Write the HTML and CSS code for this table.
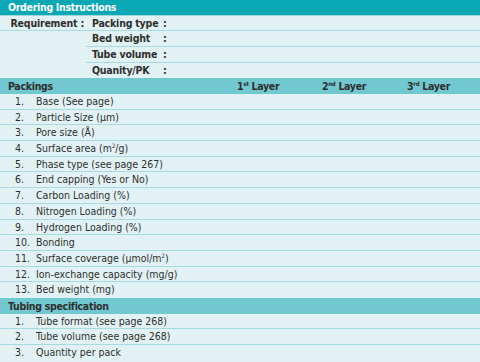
FILE: index.html
```html
<!DOCTYPE html>
<html>
<head>
<meta charset="utf-8">
<link rel="stylesheet" href="styles.css">
</head>
<body>
<div class="sheet">
  <div class="title">Ordering Instructions</div>

  <div class="req req-first">
    <div class="req-lab">Requirement :</div>
    <div class="req-field"><span class="fname">Packing type</span><span class="colon">:</span></div>
  </div>
  <div class="req">
    <div class="req-lab"></div>
    <div class="req-field lined"><span class="fname">Bed weight</span><span class="colon">:</span></div>
  </div>
  <div class="req">
    <div class="req-lab"></div>
    <div class="req-field lined"><span class="fname">Tube volume</span><span class="colon">:</span></div>
  </div>
  <div class="req">
    <div class="req-lab"></div>
    <div class="req-field"><span class="fname">Quanity/PK</span><span class="colon">:</span></div>
  </div>

  <div class="head cols">
    <span class="h-main">Packings</span>
    <span class="h-col">1<sup>st</sup> Layer</span>
    <span class="h-col">2<sup>nd</sup> Layer</span>
    <span class="h-col">3<sup>rd</sup> Layer</span>
  </div>
  <div class="item"><span class="num">1.</span><span>Base (See page)</span></div>
  <div class="item"><span class="num">2.</span><span>Particle Size (μm)</span></div>
  <div class="item"><span class="num">3.</span><span>Pore size (Å)</span></div>
  <div class="item"><span class="num">4.</span><span>Surface area (m<sup>2</sup>/g)</span></div>
  <div class="item"><span class="num">5.</span><span>Phase type (see page 267)</span></div>
  <div class="item"><span class="num">6.</span><span>End capping (Yes or No)</span></div>
  <div class="item"><span class="num">7.</span><span>Carbon Loading (%)</span></div>
  <div class="item"><span class="num">8.</span><span>Nitrogen Loading (%)</span></div>
  <div class="item"><span class="num">9.</span><span>Hydrogen Loading (%)</span></div>
  <div class="item"><span class="num">10.</span><span>Bonding</span></div>
  <div class="item"><span class="num">11.</span><span>Surface coverage (μmol/m<sup>2</sup>)</span></div>
  <div class="item"><span class="num">12.</span><span>Ion-exchange capacity (mg/g)</span></div>
  <div class="item last"><span class="num">13.</span><span>Bed weight (mg)</span></div>

  <div class="head"><span class="h-main">Tubing specification</span></div>
  <div class="item"><span class="num">1.</span><span>Tube format (see page 268)</span></div>
  <div class="item"><span class="num">2.</span><span>Tube volume (see page 268)</span></div>
  <div class="item last"><span class="num">3.</span><span>Quantity per pack</span></div>
</div>
</body>
</html>
```

FILE: styles.css
```css
html, body {
  margin: 0;
  padding: 0;
  background: #e2f2f4;
}
.sheet {
  width: 480px;
  height: 362px;
  overflow: hidden;
  background: #e2f2f4;
  font-family: "DejaVu Sans Condensed", "Liberation Sans", Arial, sans-serif;
  font-size: 10.5px;
  color: #2e2e2e;
  white-space: nowrap;
}
.title {
  height: 15.6px;
  box-sizing: border-box;
  background: #0aa8b4;
  color: #ffffff;
  font-weight: bold;
  letter-spacing: -0.3px;
  padding-left: 8px;
  line-height: 15px;
  border-bottom: 1px solid #9fd6dc;
}
.req {
  display: flex;
  height: 15.7px;
  box-sizing: border-box;
  font-weight: bold;
  letter-spacing: -0.2px;
  line-height: 15px;
}
.req-first {
  border-bottom: 1px solid #a6dbe0;
}
.req-lab {
  width: 86px;
  flex: none;
  text-align: right;
  padding-right: 2px;
  box-sizing: border-box;
}
.req-field {
  flex: 1;
  display: flex;
  padding-left: 6px;
}
.req-field.lined {
  border-bottom: 1px solid #a6dbe0;
}
.fname {
  width: 71px;
  flex: none;
}
.head {
  height: 15.7px;
  box-sizing: border-box;
  background: #72c8d1;
  font-weight: bold;
  letter-spacing: -0.3px;
  line-height: 16px;
  padding-left: 8px;
  display: flex;
}
.head.cols .h-main {
  width: 229px;
  flex: none;
}
.h-col {
  width: 85px;
  flex: none;
}
sup {
  font-size: 6px;
  line-height: 0;
  vertical-align: 4px;
}
.item {
  height: 15.7px;
  box-sizing: border-box;
  border-bottom: 1px solid #a6dbe0;
  line-height: 15px;
  padding-left: 15px;
  display: flex;
}
.item.last {
  border-bottom: none;
}
.num {
  width: 21px;
  flex: none;
}
```
